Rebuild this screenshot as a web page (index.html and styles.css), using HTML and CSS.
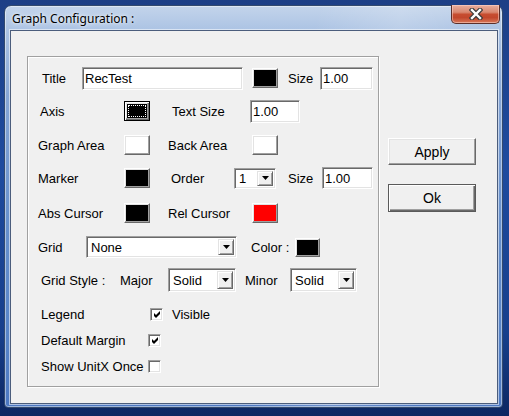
FILE: index.html
```html
<!DOCTYPE html>
<html>
<head>
<meta charset="utf-8">
<link rel="stylesheet" href="styles.css">
</head>
<body>
<div class="window">
  <div class="titlebar">
    <span class="title">Graph Configuration :</span>
    <span class="close">
      <svg width="14" height="12" viewBox="0 0 14 12">
        <path d="M3 2 L11 10 M11 2 L3 10" stroke="#3b3b3b" stroke-width="4.6" stroke-linecap="square" fill="none"/>
        <path d="M3 2 L11 10 M11 2 L3 10" stroke="#ffffff" stroke-width="2.4" stroke-linecap="square" fill="none"/>
      </svg>
    </span>
  </div>
  <div class="client">
    <div class="group">
      <div class="row r1">
        <span class="lbl w40">Title</span>
        <input class="field w161" value="RecTest" readonly>
        <span class="swatch black ml9"></span>
        <span class="lbl w32 ml10">Size</span>
        <input class="field w53" value="1.00" readonly>
      </div>
      <div class="row r2">
        <span class="lbl w84">Axis</span>
        <span class="swatch black focus"></span>
        <span class="lbl w78 ml22">Text Size</span>
        <input class="field w50" value="1.00" readonly>
      </div>
      <div class="row r3">
        <span class="lbl w86">Graph Area</span>
        <span class="swatch white"></span>
        <span class="lbl w84 ml18">Back Area</span>
        <span class="swatch white"></span>
      </div>
      <div class="row r4">
        <span class="lbl w86">Marker</span>
        <span class="swatch black"></span>
        <span class="lbl w63 ml21">Order</span>
        <span class="combo w42 h21"><span class="combo-text">1</span><span class="drop"><svg width="7" height="4" viewBox="0 0 7 4"><polygon points="0,0 7,0 3.5,4" fill="#000"/></svg></span></span>
        <span class="lbl w34 ml12">Size</span>
        <input class="field w51 h22" value="1.00" readonly>
      </div>
      <div class="row r5">
        <span class="lbl w86">Abs Cursor</span>
        <span class="swatch black"></span>
        <span class="lbl w84 ml18">Rel Cursor</span>
        <span class="swatch red"></span>
      </div>
      <div class="row r6">
        <span class="lbl w48">Grid</span>
        <span class="combo w151 h22"><span class="combo-text">None</span><span class="drop"><svg width="7" height="4" viewBox="0 0 7 4"><polygon points="0,0 7,0 3.5,4" fill="#000"/></svg></span></span>
        <span class="lbl w44 ml14">Color :</span>
        <span class="swatch black small"></span>
      </div>
      <div class="row r7">
        <span class="lbl w79">Grid Style :</span>
        <span class="lbl w48">Major</span>
        <span class="combo w68 h24"><span class="combo-text">Solid</span><span class="drop"><svg width="7" height="4" viewBox="0 0 7 4"><polygon points="0,0 7,0 3.5,4" fill="#000"/></svg></span></span>
        <span class="lbl w45 ml9">Minor</span>
        <span class="combo w67 h24"><span class="combo-text">Solid</span><span class="drop"><svg width="7" height="4" viewBox="0 0 7 4"><polygon points="0,0 7,0 3.5,4" fill="#000"/></svg></span></span>
      </div>
      <div class="row r8">
        <span class="lbl w109">Legend</span>
        <span class="check"><svg width="9" height="9" viewBox="0 0 9 9"><polygon points="1,3 3,5 7,1 7,4 3,8 1,6" fill="#000"/></svg></span>
        <span class="lbl ml9">Visible</span>
      </div>
      <div class="row r9">
        <span class="lbl w107">Default Margin</span>
        <span class="check"><svg width="9" height="9" viewBox="0 0 9 9"><polygon points="1,3 3,5 7,1 7,4 3,8 1,6" fill="#000"/></svg></span>
      </div>
      <div class="row r10">
        <span class="lbl w107">Show UnitX Once</span>
        <span class="check"></span>
      </div>
    </div>
    <div class="actions">
      <span class="btn">Apply</span>
      <span class="btn default">Ok</span>
    </div>
  </div>
</div>
</body>
</html>
```
FILE: styles.css
```css
html, body {
  margin: 0;
  padding: 0;
}
body {
  width: 509px;
  height: 416px;
  overflow: hidden;
  background: linear-gradient(180deg, #1d3f86 0%, #1e4b9f 40%, #173f8c 80%, #0c2762 100%);
  font-family: "Liberation Sans", Arial, sans-serif;
  font-size: 13px;
  color: #000;
  padding-top: 5px;
  padding-left: 4px;
  box-sizing: border-box;
}
.window {
  width: 499px;
  height: 403px;
  box-sizing: border-box;
  border: 1px solid #334a6e;
  border-radius: 7px 7px 4px 4px;
  background:
    linear-gradient(100deg, rgba(255,255,255,0) 55%, rgba(255,255,255,0.18) 70%, rgba(255,255,255,0) 85%),
    linear-gradient(180deg, #c3d4eb 0px, #aac2e3 26px, #86a6d6 90px, #6690cd 220px, #5683c8 340px, #4c78c1 100%);
  box-shadow: inset 0 0 0 1px rgba(255,255,255,0.45);
  display: flex;
  flex-direction: column;
}
.titlebar {
  height: 24px;
  display: flex;
  align-items: flex-start;
  padding-left: 7px;
}
.title {
  font-family: "Noto Sans", "Open Sans", sans-serif;
  font-size: 12px;
  line-height: 16px;
  margin-top: 5px;
  color: #000;
  text-shadow: 0 0 6px rgba(255,255,255,0.9), 0 0 3px rgba(255,255,255,0.8);
}
.close {
  margin-left: auto;
  margin-right: 2px;
  margin-top: -1px;
  width: 49px;
  height: 19px;
  box-sizing: border-box;
  border: 1px solid #5b2f2a;
  border-top: none;
  border-radius: 0 0 5px 5px;
  background: linear-gradient(180deg, #e9ae9e 0%, #d98870 40%, #c74d30 52%, #c2472c 70%, #d8785a 100%);
  box-shadow: inset 0 0 0 1px rgba(255,220,210,0.5);
  display: flex;
  align-items: center;
  justify-content: center;
}
.client {
  margin-left: 5px;
  width: 488px;
  height: 374px;
  box-sizing: border-box;
  border: 1px solid #4b5d7c;
  box-shadow: 0 0 0 1px rgba(255,255,255,0.55);
  background: #f0f0f0;
  display: flex;
  align-items: flex-start;
}
.group {
  margin: 25px 0 0 16px;
  width: 352px;
  height: 331px;
  box-sizing: border-box;
  border: 1px solid #a0a0a0;
  box-shadow: inset 1px 1px 0 #ffffff, 1px 1px 0 #ffffff;
  padding-top: 5px;
  display: flex;
  flex-direction: column;
}
.row {
  display: flex;
  align-items: center;
  flex: none;
}
.r1 { height: 32px; padding-left: 14px; }
.r2 { height: 34px; padding-left: 12px; }
.r3 { height: 34px; padding-left: 10px; }
.r4 { height: 32px; padding-left: 10px; }
.r5 { height: 38px; padding-left: 10px; }
.r6 { height: 30px; padding-left: 10px; }
.r7 { height: 36px; padding-left: 13px; }
.r8 { height: 32px; padding-left: 13px; }
.r9 { height: 20px; padding-left: 13px; }
.r10 { height: 32px; padding-left: 13px; }

.lbl { flex: none; white-space: nowrap; line-height: 15px; }

.w32 { width: 32px; }
.w34 { width: 34px; }
.w40 { width: 40px; }
.w42 { width: 42px; }
.w44 { width: 44px; }
.w45 { width: 45px; }
.w48 { width: 48px; }
.w50 { width: 50px; }
.w51 { width: 51px; }
.w53 { width: 53px; }
.w63 { width: 63px; }
.w67 { width: 67px; }
.w68 { width: 68px; }
.w78 { width: 78px; }
.w79 { width: 79px; }
.w84 { width: 84px; }
.w86 { width: 86px; }
.w107 { width: 107px; }
.w109 { width: 109px; }
.w151 { width: 151px; }
.w161 { width: 161px; }
.ml9 { margin-left: 9px; }
.ml10 { margin-left: 10px; }
.ml12 { margin-left: 12px; }
.ml14 { margin-left: 14px; }
.ml18 { margin-left: 18px; }
.ml21 { margin-left: 21px; }
.ml22 { margin-left: 22px; }

.field {
  flex: none;
  height: 23px;
  box-sizing: border-box;
  margin: 0;
  padding: 1px 2px 0 2px;
  border: 1px solid;
  border-color: #a0a0a0 #ffffff #ffffff #a0a0a0;
  box-shadow: inset 1px 1px 0 #696969, inset -1px -1px 0 #e3e3e3;
  background: #fff;
  font-family: "Liberation Sans", Arial, sans-serif;
  font-size: 13px;
  color: #000;
  outline: none;
}
.h21 { height: 21px; }
.h22 { height: 22px; }
.h24 { height: 24px; }

.swatch {
  flex: none;
  position: relative;
  width: 26px;
  height: 20px;
  box-sizing: border-box;
  border: 1px solid;
  border-color: #ffffff #696969 #696969 #ffffff;
  box-shadow: inset -1px -1px 0 #a0a0a0, inset 1px 1px 0 #e3e3e3;
}
.swatch.small { width: 25px; height: 19px; }
.black { background: #000; }
.white { background: #fff; }
.red { background: #ff0000; }
.swatch.focus {
  border: 1px solid #000;
  box-shadow: inset 1px 1px 0 #ffffff, inset -1px -1px 0 #696969, inset -2px -2px 0 #a0a0a0, inset 2px 2px 0 #e3e3e3;
}
.swatch.focus::after {
  content: "";
  position: absolute;
  left: 3px;
  top: 3px;
  right: 3px;
  bottom: 3px;
  border: 1px dotted #ffffff;
}

.combo {
  flex: none;
  display: flex;
  align-items: stretch;
  box-sizing: border-box;
  border: 1px solid;
  border-color: #a0a0a0 #ffffff #ffffff #a0a0a0;
  box-shadow: inset 1px 1px 0 #696969, inset -1px -1px 0 #e3e3e3;
  background: #fff;
  padding: 2px 2px 2px 2px;
}
.combo-text {
  flex: 1;
  padding-left: 2px;
  display: flex;
  align-items: center;
  line-height: 15px;
}
.drop {
  flex: none;
  width: 16px;
  box-sizing: border-box;
  background: #f0f0f0;
  border: 1px solid;
  border-color: #e3e3e3 #696969 #696969 #e3e3e3;
  box-shadow: inset 1px 1px 0 #ffffff, inset -1px -1px 0 #a0a0a0;
  display: flex;
  align-items: center;
  justify-content: center;
}

.check {
  flex: none;
  width: 13px;
  height: 13px;
  box-sizing: border-box;
  border: 1px solid;
  border-color: #a0a0a0 #ffffff #ffffff #a0a0a0;
  box-shadow: inset 1px 1px 0 #696969, inset -1px -1px 0 #e3e3e3;
  background: #fff;
  display: flex;
  align-items: center;
  justify-content: center;
}
.check svg { margin-left: 1px; margin-top: 1px; }

.actions {
  margin: 107px 0 0 9px;
  display: flex;
  flex-direction: column;
  gap: 19px;
}
.btn {
  width: 88px;
  height: 27px;
  box-sizing: border-box;
  border: 1px solid;
  border-color: #ffffff #696969 #696969 #ffffff;
  box-shadow: inset -1px -1px 0 #a0a0a0, inset 1px 1px 0 #e3e3e3;
  background: #f0f0f0;
  display: flex;
  align-items: center;
  justify-content: center;
  font-size: 14px;
}
.btn.default {
  height: 28px;
  border: 1px solid #5a5a5a;
  box-shadow: inset 1px 1px 0 #ffffff, inset -1px -1px 0 #696969, inset -2px -2px 0 #a0a0a0;
}
```
